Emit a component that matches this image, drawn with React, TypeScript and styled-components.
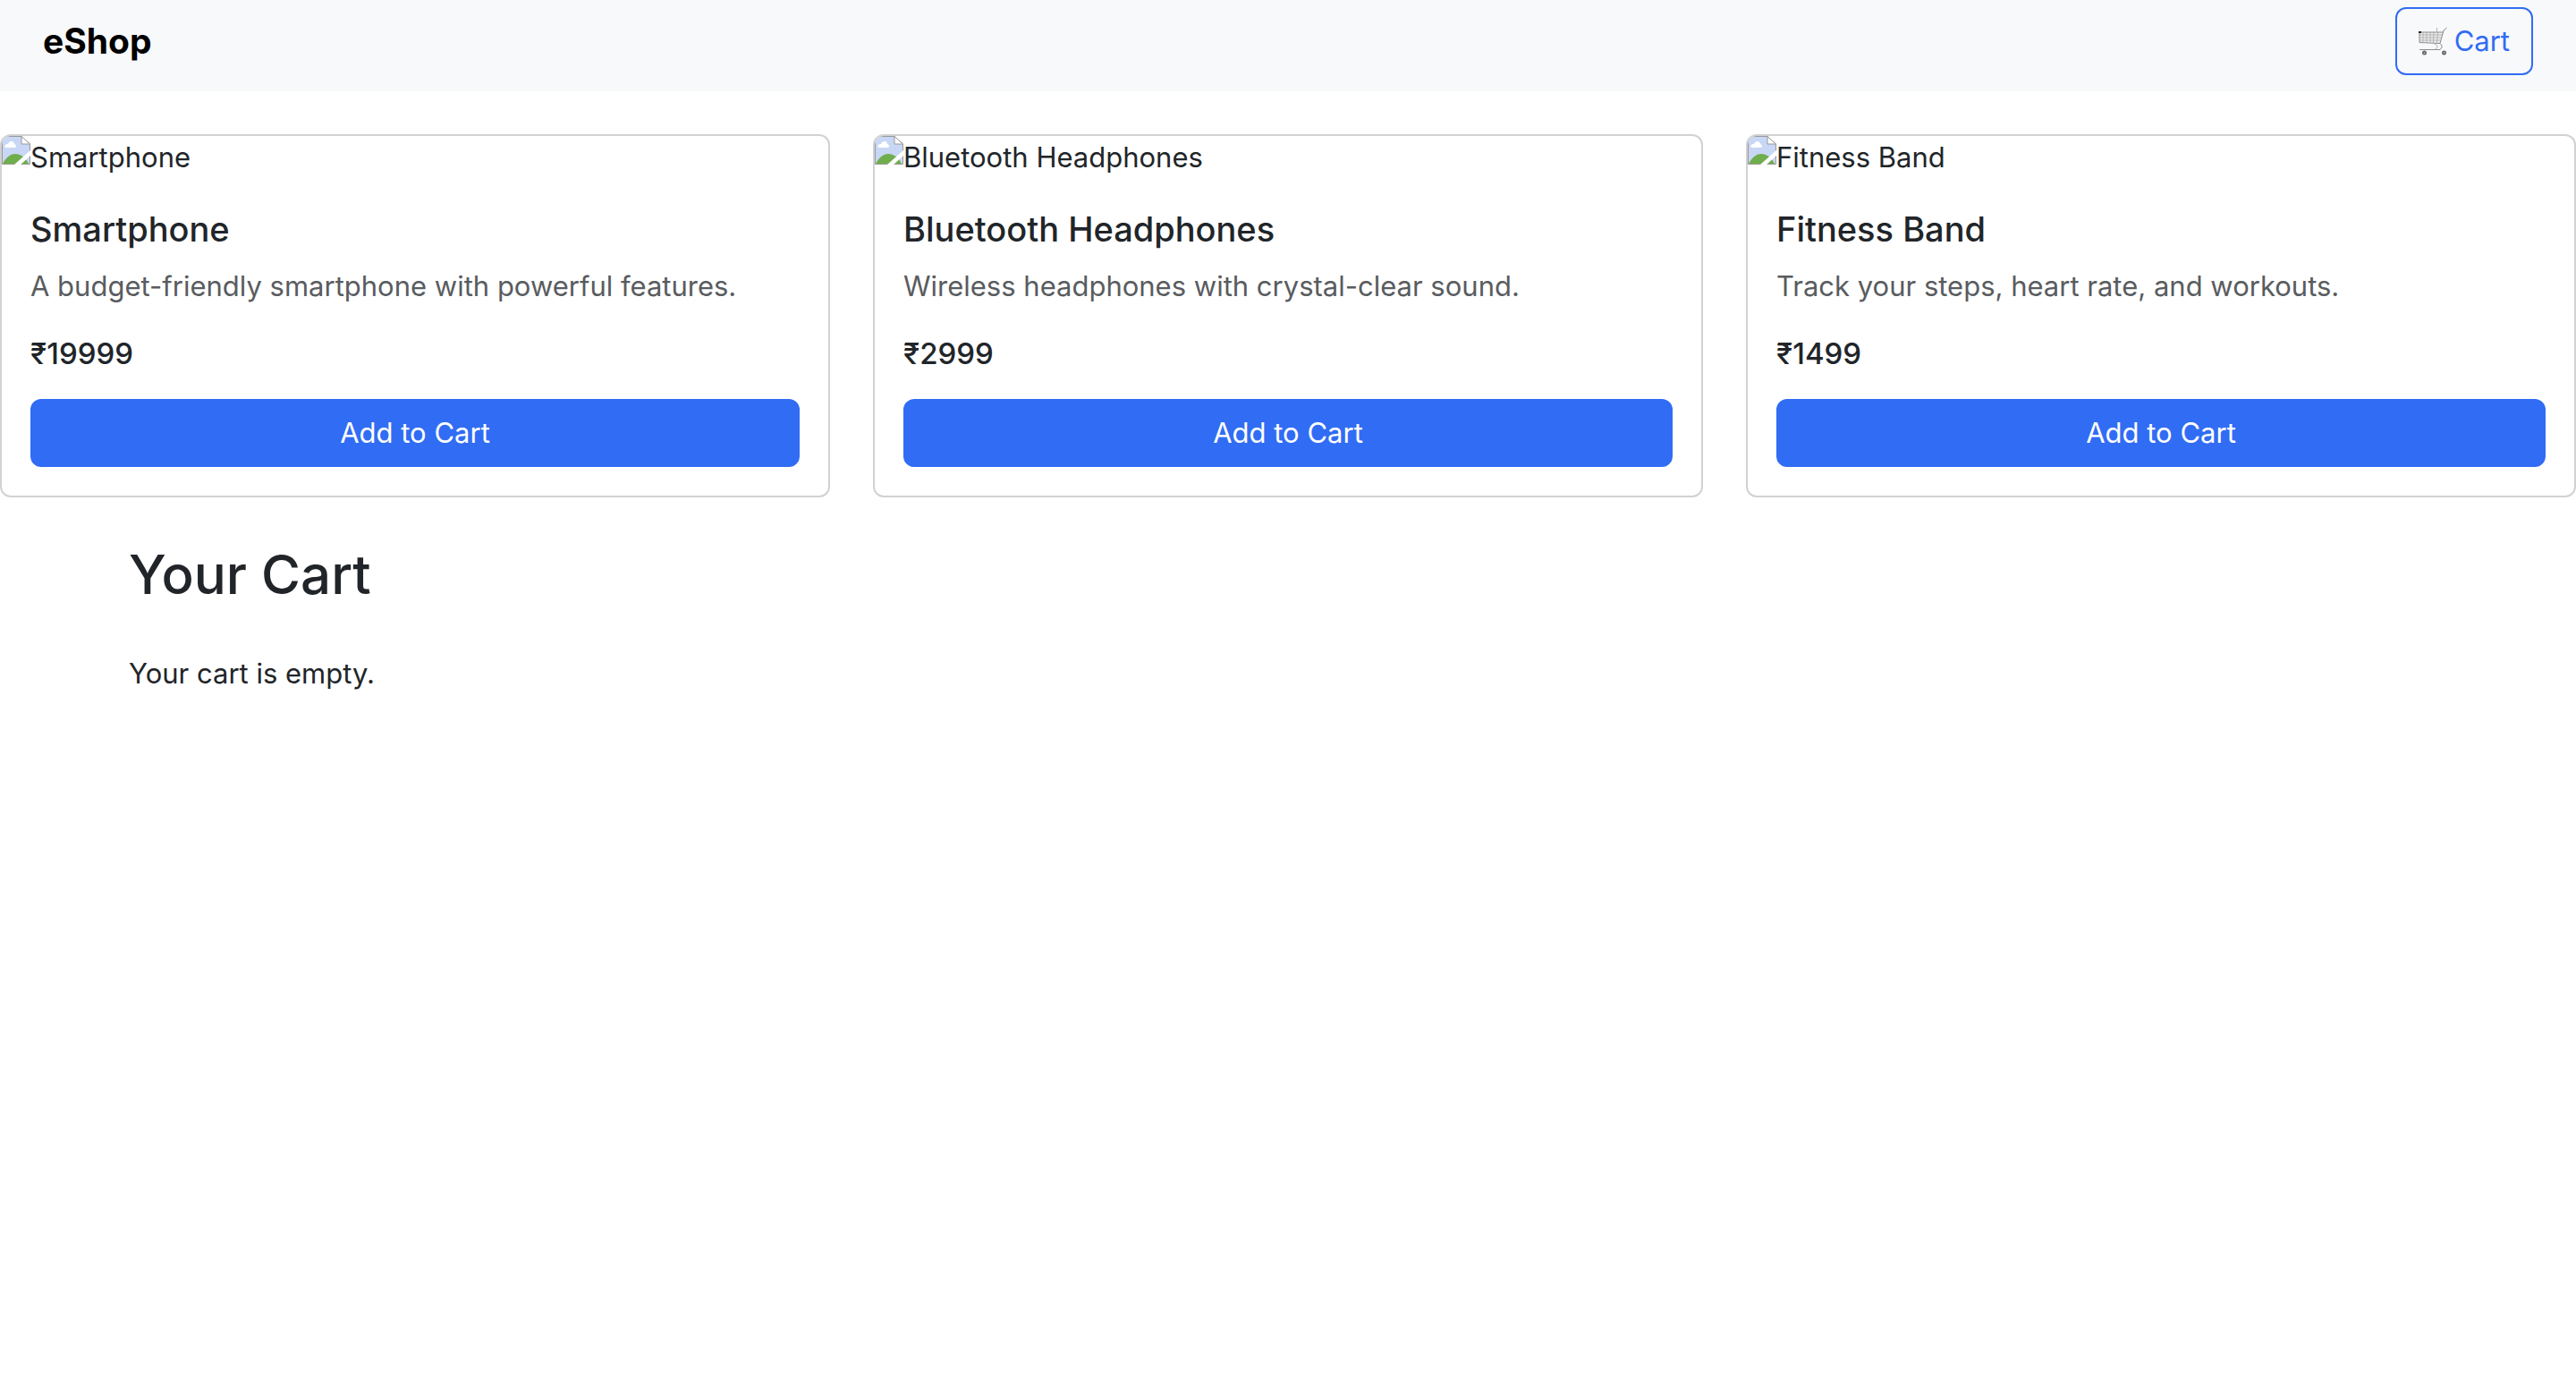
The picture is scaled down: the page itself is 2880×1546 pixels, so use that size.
import React, { useState } from "react";
import styled, { createGlobalStyle, css } from "styled-components";

const GlobalStyle = createGlobalStyle`
  *, *::before, *::after { box-sizing: border-box; }
  body {
    margin: 0;
    background: #fff;
    color: #212529;
    font: 400 31px/48px Inter, "Liberation Sans", sans-serif;
  }
`;

const NavBar = styled.header`
  display: flex;
  align-items: center;
  justify-content: space-between;
  padding: 8px 48px 18px;
  background: #f8f9fb;
`;

const Brand = styled.a`
  color: #000;
  font-size: 39px;
  font-weight: 700;
  line-height: 60px;
  text-decoration: none;
`;

const Button = styled.button<{ $outline?: boolean }>`
  display: flex;
  align-items: center;
  justify-content: center;
  gap: 8px;
  padding: 12px 24px;
  border: 2px solid #316cf4;
  border-radius: 12px;
  font: inherit;
  cursor: pointer;
  ${(p) =>
    p.$outline
      ? css`
          background: transparent;
          color: #316cf4;
        `
      : css`
          background: #316cf4;
          color: #fff;
        `}
`;

const ProductGrid = styled.section`
  display: grid;
  grid-template-columns: repeat(3, minmax(0, 1fr));
  gap: 48px;
  margin-top: 48px;
`;

const Card = styled.article`
  overflow: hidden;
  border: 2px solid #d2d2d2;
  border-radius: 12px;
  background: #fff;
`;

const Thumbnail = styled.div`
  display: flex;
  align-items: flex-start;
`;

const CardBody = styled.div`
  display: flex;
  flex-direction: column;
  padding: 32px;
`;

const CardTitle = styled.h5`
  margin: 0 0 16px;
  font-size: 38px;
  font-weight: 500;
  line-height: 48px;
`;

const CardText = styled.p`
  margin: 0 0 32px;
  color: #595c5f;
`;

const Price = styled.h6`
  margin: 0 0 32px;
  font-size: 33px;
  font-weight: 500;
  line-height: 38px;
`;

const CartSection = styled.section`
  max-width: 2640px;
  margin: 48px auto 0;
  padding: 0 24px;
`;

const CartTitle = styled.h2`
  margin: 0 0 48px;
  font-size: 60px;
  font-weight: 500;
  line-height: 77px;
`;

const CartMessage = styled.p`
  margin: 0;
`;

const CartIcon = () => (
  <svg width="32" height="32" viewBox="0 0 32 32" fill="none" aria-hidden="true">
    <path d="M1 6H27L24 18L1 17Z" fill="#eeeeee" />
    <path
      d="M1 9H26M1 12H25.500M1 15H24.500M5 6V17M9 6V17M13 6V17.500M17 6L16.500 18M21.500 6L20.500 18"
      stroke="#b4b4b4"
    />
    <path d="M1 6H27M1 6V17.500L24 18.500M31.500 1L28 4L24 18.500L26 21V23L24 25.500H1" stroke="#8a8a8a" />
    <path d="M17 18.500L21 21V23L18 25.500M20.500 1V6" stroke="#b4b4b4" />
    <path d="M0 6H3" stroke="#223" strokeWidth="2" />
    <circle cx="6.500" cy="29" r="2.500" fill="#666" />
    <circle cx="28.500" cy="29" r="2.500" fill="#666" />
    <circle cx="6.500" cy="29" r="1" fill="#aaa" />
    <circle cx="28.500" cy="29" r="1" fill="#aaa" />
  </svg>
);

const MissingImageIcon = () => (
  <svg width="32" height="32" viewBox="0 0 32 32" aria-hidden="true">
    <path d="M0.500 0.500H22L31.500 9V31.500H0.500Z" fill="#c8d7f5" stroke="#999" />
    <path d="M4 13C2 10 5 9 7 9C8 5 14 5 14 9C17 10 16 13 15 13Z" fill="#fff" />
    <path d="M1 31C5 23 11 20 15 20C22 20 27 25 30 31Z" fill="#6fae4c" />
    <path d="M22 0.500V9H31.500Z" fill="#fff" stroke="#999" />
    <path d="M14 32L32 16V22L21 32Z" fill="#fff" />
  </svg>
);

type Product = { name: string; text: string; price: number };

const products: Product[] = [
  { name: "Smartphone", text: "A budget-friendly smartphone with powerful features.", price: 19999 },
  { name: "Bluetooth Headphones", text: "Wireless headphones with crystal-clear sound.", price: 2999 },
  { name: "Fitness Band", text: "Track your steps, heart rate, and workouts.", price: 1499 },
];

export default function App() {
  const [cart, setCart] = useState<Product[]>([]);

  return (
    <>
      <GlobalStyle />
      <NavBar>
        <Brand href="#">eShop</Brand>
        <Button $outline type="button">
          <CartIcon />
          Cart
        </Button>
      </NavBar>
      <main>
        <ProductGrid>
          {products.map((product) => (
            <Card key={product.name}>
              <Thumbnail>
                <MissingImageIcon />
                {product.name}
              </Thumbnail>
              <CardBody>
                <CardTitle>{product.name}</CardTitle>
                <CardText>{product.text}</CardText>
                <Price>₹{product.price}</Price>
                <Button type="button" onClick={() => setCart([...cart, product])}>
                  Add to Cart
                </Button>
              </CardBody>
            </Card>
          ))}
        </ProductGrid>
        <CartSection>
          <CartTitle>Your Cart</CartTitle>
          {cart.length === 0 ? (
            <CartMessage>Your cart is empty.</CartMessage>
          ) : (
            cart.map((item, index) => (
              <CartMessage key={index}>
                {item.name} – ₹{item.price}
              </CartMessage>
            ))
          )}
        </CartSection>
      </main>
    </>
  );
}
